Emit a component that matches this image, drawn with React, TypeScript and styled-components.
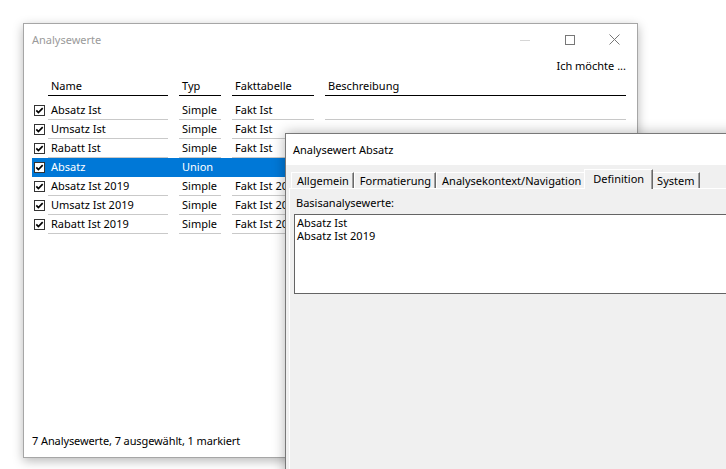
import React from "react";
import styled, { createGlobalStyle } from "styled-components";

const GlobalStyle = createGlobalStyle`
  html, body { margin: 0; padding: 0; background: #fff; }
  body { font-family: "Noto Sans", "Open Sans", sans-serif; font-size: 11px; color: #000; }
  * { box-sizing: border-box; }
`;

const Desktop = styled.div`
  position: relative;
  width: 726px;
  height: 469px;
  overflow: hidden;
  background: #fff;
`;

const MainWindow = styled.section`
  position: absolute;
  left: 23px;
  top: 23px;
  width: 615px;
  height: 435px;
  background: #fff;
  border: 1px solid #a6a6a6;
  box-shadow: 0 3px 10px rgba(0, 0, 0, 0.28);
  display: flex;
  flex-direction: column;
`;

const TitleBar = styled.header`
  height: 31px;
  display: flex;
  align-items: center;
  padding-left: 8px;
`;

const WindowTitle = styled.span`
  color: #9a9a9a;
`;

const Controls = styled.div`
  margin-left: auto;
  display: flex;
  height: 100%;
`;

const ControlButton = styled.div`
  width: 45px;
  height: 100%;
  display: flex;
  align-items: center;
  justify-content: center;
`;

const Toolbar = styled.div`
  height: 20px;
  display: flex;
  align-items: center;
  justify-content: flex-end;
  padding-right: 11px;
`;

const Table = styled.div`
  padding-left: 8px;
  display: flex;
  flex-direction: column;
`;

const HeaderRow = styled.div`
  display: flex;
  padding-left: 16px;
  margin-bottom: 5px;
`;

const HeaderCell = styled.div<{ $w: number; $first?: boolean }>`
  width: ${(p) => p.$w}px;
  margin-left: ${(p) => (p.$first ? 0 : 11)}px;
  height: 21px;
  line-height: 21px;
  padding-left: 3px;
  border-bottom: 1.5px solid #000;
`;

const Row = styled.div<{ $selected?: boolean }>`
  display: flex;
  width: 594px;
  height: 19px;
  background: ${(p) => (p.$selected ? "#0078d7" : "transparent")};
  color: ${(p) => (p.$selected ? "#fff" : "#000")};
`;

const CheckCell = styled.div`
  width: 16px;
  display: flex;
  align-items: center;
  padding-left: 2px;
`;

const Cell = styled.div<{ $w: number; $first?: boolean; $selected?: boolean }>`
  width: ${(p) => p.$w}px;
  margin-left: ${(p) => (p.$first ? 0 : 11)}px;
  height: 19px;
  line-height: 18px;
  padding-left: 3px;
  white-space: nowrap;
  overflow: hidden;
  border-bottom: 1px solid ${(p) => (p.$selected ? "transparent" : "#c9c9c9")};
`;

const Status = styled.div`
  margin-top: auto;
  padding: 0 0 8px 8px;
  line-height: 16px;
  letter-spacing: -0.1px;
`;

const Dialog = styled.section`
  position: absolute;
  left: 285px;
  top: 133px;
  width: 470px;
  height: 360px;
  border: 1px solid #787878;
  box-shadow: 0 0 12px rgba(0, 0, 0, 0.3);
  display: flex;
  flex-direction: column;
  background: #f0f0f0;
`;

const DialogTitle = styled.header`
  height: 31px;
  background: #fff;
  display: flex;
  align-items: center;
  padding-left: 7px;
`;

const DialogBody = styled.div`
  flex: 1;
  padding: 4px 0 0 3px;
  display: flex;
  flex-direction: column;
`;

const TabRow = styled.div`
  display: flex;
  align-items: flex-end;
  height: 19px;
  padding-left: 2px;
  position: relative;
  z-index: 1;
`;

const Tab = styled.div<{ $active?: boolean }>`
  height: ${(p) => (p.$active ? 20 : 16)}px;
  margin: ${(p) => (p.$active ? "0 -2px -1px -2px" : "0")};
  padding: ${(p) => (p.$active ? "0 8px 3px 8px" : "0 4px 0 5px")};
  line-height: ${(p) => (p.$active ? 17 : 16)}px;
  background: #f0f0f0;
  border-top: 1px solid #fff;
  border-left: 1px solid #fff;
  border-right: 1px solid #696969;
  box-shadow: inset -1px 0 #a0a0a0;
  white-space: nowrap;
  z-index: ${(p) => (p.$active ? 2 : 1)};
`;

const TabPanel = styled.div`
  flex: 1;
  border-top: 1px solid #fff;
  border-left: 1px solid #fff;
  background: #f0f0f0;
  padding: 6px 0 0 4px;
`;

const FieldLabel = styled.div`
  line-height: 16px;
  padding-left: 2px;
  margin-bottom: 3px;
`;

const ListBox = styled.div`
  width: 500px;
  height: 80px;
  background: #fff;
  border: 1px solid #646464;
  padding: 0 0 0 2px;
`;

const ListItem = styled.div`
  line-height: 13px;
  padding-top: 1px;
  height: 13px;
`;

const CheckIcon = () => (
  <svg width="11" height="11" viewBox="0 0 11 11">
    <rect x="0.5" y="0.5" width="10" height="10" fill="#fff" stroke="#333" />
    <path d="M2.3 5.4 L4.4 7.6 L8.7 3.2" fill="none" stroke="#000" strokeWidth="1.7" />
  </svg>
);

const rows = [
  { name: "Absatz Ist", typ: "Simple", fakt: "Fakt Ist" },
  { name: "Umsatz Ist", typ: "Simple", fakt: "Fakt Ist" },
  { name: "Rabatt Ist", typ: "Simple", fakt: "Fakt Ist" },
  { name: "Absatz", typ: "Union", fakt: "", selected: true },
  { name: "Absatz Ist 2019", typ: "Simple", fakt: "Fakt Ist 2019" },
  { name: "Umsatz Ist 2019", typ: "Simple", fakt: "Fakt Ist 2019" },
  { name: "Rabatt Ist 2019", typ: "Simple", fakt: "Fakt Ist 2019" },
];

const tabs = ["Allgemein", "Formatierung", "Analysekontext/Navigation", "Definition", "System"];

export default function App() {
  return (
    <Desktop>
      <GlobalStyle />
      <MainWindow>
        <TitleBar>
          <WindowTitle>Analysewerte</WindowTitle>
          <Controls>
            <ControlButton>
              <svg width="10" height="10" viewBox="0 0 10 10">
                <line x1="0" y1="5.5" x2="10" y2="5.5" stroke="#d6d6d6" />
              </svg>
            </ControlButton>
            <ControlButton>
              <svg width="10" height="10" viewBox="0 0 10 10">
                <rect x="0.5" y="0.5" width="9" height="9" fill="none" stroke="#777" />
              </svg>
            </ControlButton>
            <ControlButton>
              <svg width="11" height="11" viewBox="0 0 11 11">
                <path d="M0.5 0.5 L10.5 10.5 M10.5 0.5 L0.5 10.5" stroke="#777" strokeWidth="1" />
              </svg>
            </ControlButton>
          </Controls>
        </TitleBar>
        <Toolbar>Ich möchte ...</Toolbar>
        <Table>
          <HeaderRow>
            <HeaderCell $w={120} $first>Name</HeaderCell>
            <HeaderCell $w={42}>Typ</HeaderCell>
            <HeaderCell $w={82}>Fakttabelle</HeaderCell>
            <HeaderCell $w={301}>Beschreibung</HeaderCell>
          </HeaderRow>
          {rows.map((r) => (
            <Row key={r.name} $selected={r.selected}>
              <CheckCell>
                <CheckIcon />
              </CheckCell>
              <Cell $w={120} $first $selected={r.selected}>{r.name}</Cell>
              <Cell $w={42} $selected={r.selected}>{r.typ}</Cell>
              <Cell $w={82} $selected={r.selected}>{r.fakt}</Cell>
              <Cell $w={301} $selected={r.selected}></Cell>
            </Row>
          ))}
        </Table>
        <Status>7 Analysewerte, 7 ausgewählt, 1 markiert</Status>
      </MainWindow>
      <Dialog>
        <DialogTitle>Analysewert Absatz</DialogTitle>
        <DialogBody>
          <TabRow>
            {tabs.map((t) => (
              <Tab key={t} $active={t === "Definition"}>{t}</Tab>
            ))}
          </TabRow>
          <TabPanel>
            <FieldLabel>Basisanalysewerte:</FieldLabel>
            <ListBox>
              <ListItem>Absatz Ist</ListItem>
              <ListItem>Absatz Ist 2019</ListItem>
            </ListBox>
          </TabPanel>
        </DialogBody>
      </Dialog>
    </Desktop>
  );
}
